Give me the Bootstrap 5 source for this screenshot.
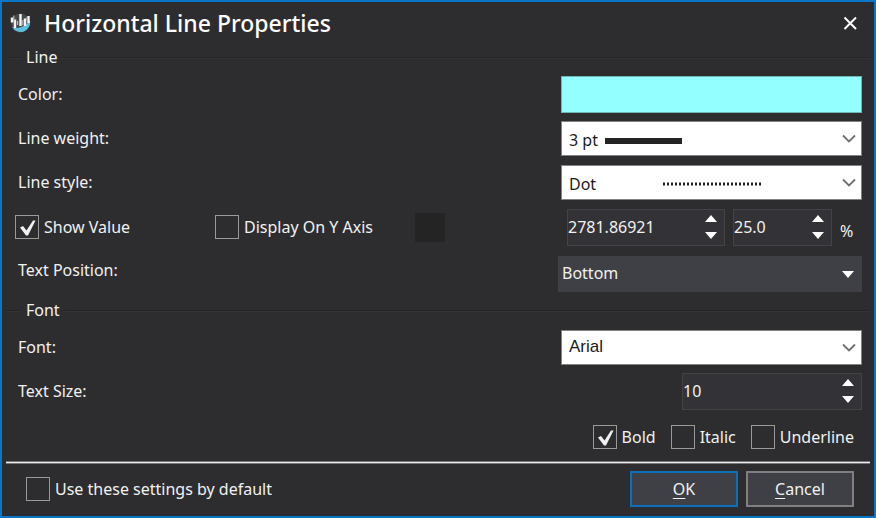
<!DOCTYPE html>
<html lang="en">
<head>
<meta charset="utf-8">
<meta name="viewport" content="width=device-width, initial-scale=1">
<title>Horizontal Line Properties</title>
<link href="https://cdn.jsdelivr.net/npm/bootstrap@5.3.0/dist/css/bootstrap.min.css" rel="stylesheet">
<style>
  body { background: #2d2d30; color: #f1f1f1; font-family: "Noto Sans", "Segoe UI", sans-serif; font-size: 16px; line-height: 24px; }
  .dialog { min-height: 100vh; border: 2px solid #0a76c8; }
  .title-bar { height: 41px; padding: 0 16px 0 8px; gap: 12px; }
  .title-bar h1 { font-size: 23px; line-height: 32px; font-weight: 500; color: #fff; }
  .close-btn { line-height: 0; }
  .group-title { height: 29px; font-size: 16px; line-height: 29px; padding: 0 4px; gap: 5px; }
  .group-title::before, .group-title::after { content: ""; height: 2px; background: #252528; border-bottom: 1px solid #353538; }
  .group-title::before { width: 15px; }
  .group-title::after { flex: 1; }
  .prop-row { min-height: 44px; padding: 0 12px 0 16px; }
  .position-row { margin-top: 4px; }
  .position-row label { margin-top: -8px; }
  .field-col { width: 301px; }
  .field-wide { width: 304px; }
  .color-btn { height: 37px; background: #93ffff; border: 1px solid #6fb5b6; }
  .light-select, .dark-select { appearance: none; width: 100%; border-radius: 0; font-size: 16px; line-height: 24px; display: block; }
  .light-select { height: 35px; padding: 3px 32px 0 7px; background: #fff; color: #1b1b1b; border: 1px solid #828282; }
  .face-select { padding-top: 0; font-family: "Liberation Sans", Arial, sans-serif; font-size: 17px; }
  .dark-select { height: 36px; padding: 0 32px 2px 4px; background: #3f3f46; color: #f1f1f1; border: 0; }
  .arrow { right: 6px; top: 13px; pointer-events: none; }
  .arrow-solid { right: 8px; top: 15px; pointer-events: none; }
  .sample-weight { left: 44px; top: 16px; pointer-events: none; }
  .sample-style { left: 102px; top: 17px; pointer-events: none; }
  .tick { appearance: none; flex: none; width: 24px; height: 24px; margin: 0; border: 1px solid #999; background: transparent center / 22px 22px no-repeat; }
  .tick:checked { background-image: url("data:image/svg+xml,%3Csvg xmlns='http://www.w3.org/2000/svg' viewBox='0 0 22 22'%3E%3Cpath d='M4 11.5L7 10l3.5 4.500L17 4.500h2.500L12 19.500H10z' fill='%23f1f1f1'/%3E%3C/svg%3E"); }
  .tick-label { gap: 5px; }
  .axis-row { padding-left: 13px; padding-top: 2px; }
  .axis-item { width: 200px; }
  .axis-color { width: 30px; height: 29px; background: #242424; border: 0; }
  .spin { height: 37px; background: #333337; border: 1px solid #434346; }
  .spin input { min-width: 0; flex: 1; background: transparent; border: 0; color: #f1f1f1; padding: 0 0 1px 0; outline: 0; }
  .spin button { display: block; width: 26px; height: 17px; padding: 0; border: 0; background: none; line-height: 0; }
  .spin-value { width: 158px; }
  .spin-percent { width: 99px; }
  .spin-size { width: 180px; }
  .percent-sign { width: 22px; padding-top: 8px; }
  .style-row { min-height: 48px; gap: 15px; padding-right: 20px; }
  .rule { height: 3px; margin: 0 4px; background: #ececec; border: solid #777; border-width: 1px 0; }
  .footer-bar { padding: 0 20px 3px 24px; height: 52px; gap: 8px; }
  .dialog-btn { width: 108px; height: 36px; background: #3f3f46; color: #f1f1f1; border: 2px solid #808083; padding: 0; }
  .dialog-btn.default-btn { border-color: #0a70bb; }
  .dialog-btn u { text-underline-offset: 3px; }
</style>
<script src="https://cdn.jsdelivr.net/npm/bootstrap@5.3.0/dist/js/bootstrap.bundle.min.js"></script>
</head>
<body>
<svg class="d-none">
  <symbol id="chevron" viewBox="0 0 14 9"><path d="M1 1.500L7 7.500L13 1.500" fill="none" stroke="#707070" stroke-width="1.800"/></symbol>
  <symbol id="up" viewBox="0 0 12 7"><path d="M0 7L6 0L12 7z" fill="#fff"/></symbol>
  <symbol id="down" viewBox="0 0 12 7"><path d="M0 0L6 7L12 0z" fill="#fff"/></symbol>
</svg>
<form class="dialog d-flex flex-column">
  <header class="title-bar d-flex align-items-center">
    <svg width="22" height="22" viewBox="0 0 22 22" aria-hidden="true">
      <circle cx="10.500" cy="11" r="9.500" fill="#45484b"/>
      <path d="M2 15Q8 17 12.500 14.500T20 8.500A9.700 9.700 0 0 1 2 15z" fill="#5cc0e3"/>
      <path d="M2 5.500v5M5 7.500v8.500M10.500 2v12M15 6.500v7.500M18.500 4v7" stroke="#f4f4f4" stroke-width="2.400"/>
      <path d="M3.800 3.500v7M7.600 9v4M12.800 8v5M17 5v4" stroke="#b4b6b8" stroke-width="1.200"/>
    </svg>
    <h1 class="mb-0 flex-grow-1">Horizontal Line Properties</h1>
    <button type="button" class="close-btn border-0 bg-transparent p-0" aria-label="Close">
      <svg width="15" height="14" viewBox="0 0 15 14"><path d="M1.500 1.500L13 13M13 1.500L1.500 13" stroke="#fff" stroke-width="2"/></svg>
    </button>
  </header>

  <fieldset>
    <legend class="group-title d-flex align-items-center mb-0">Line</legend>
    <div class="prop-row d-flex align-items-center justify-content-between">
      <label for="color">Color:</label>
      <button type="button" id="color" class="color-btn field-col" aria-label="Line color"></button>
    </div>
    <div class="prop-row d-flex align-items-center justify-content-between">
      <label for="weight">Line weight:</label>
      <div class="field-col position-relative">
        <select id="weight" class="light-select"><option>3 pt</option></select>
        <svg class="sample-weight position-absolute" width="78" height="8"><rect x="0" y="1" width="77" height="6" fill="#242424"/></svg>
        <svg class="arrow position-absolute" width="14" height="9"><use href="#chevron"/></svg>
      </div>
    </div>
    <div class="prop-row d-flex align-items-center justify-content-between">
      <label for="style">Line style:</label>
      <div class="field-col position-relative">
        <select id="style" class="light-select"><option>Dot</option></select>
        <svg class="sample-style position-absolute" width="100" height="4"><path d="M0 2H100" stroke="#222" stroke-width="3" stroke-dasharray="2 2"/></svg>
        <svg class="arrow position-absolute" width="14" height="9"><use href="#chevron"/></svg>
      </div>
    </div>
    <div class="prop-row axis-row d-flex align-items-center">
      <label class="tick-label axis-item d-flex align-items-center"><input type="checkbox" class="tick" checked>Show Value</label>
      <label class="tick-label axis-item d-flex align-items-center"><input type="checkbox" class="tick">Display On Y Axis</label>
      <button type="button" class="axis-color" aria-label="Axis color"></button>
      <div class="spin spin-value d-flex align-items-center ms-auto me-2">
        <input type="text" aria-label="Value" value="2781.86921">
        <div>
          <button type="button" aria-label="Increase value"><svg width="12" height="7"><use href="#up"/></svg></button>
          <button type="button" aria-label="Decrease value"><svg width="12" height="7"><use href="#down"/></svg></button>
        </div>
      </div>
      <div class="spin spin-percent d-flex align-items-center me-2">
        <input type="text" id="percent" aria-label="Percent" value="25.0">
        <div>
          <button type="button" aria-label="Increase percent"><svg width="12" height="7"><use href="#up"/></svg></button>
          <button type="button" aria-label="Decrease percent"><svg width="12" height="7"><use href="#down"/></svg></button>
        </div>
      </div>
      <label for="percent" class="percent-sign">%</label>
    </div>
    <div class="prop-row position-row d-flex align-items-center justify-content-between">
      <label for="position">Text Position:</label>
      <div class="field-wide position-relative">
        <select id="position" class="dark-select"><option>Bottom</option></select>
        <svg class="arrow-solid position-absolute" width="12" height="7"><use href="#down"/></svg>
      </div>
    </div>
  </fieldset>

  <fieldset>
    <legend class="group-title d-flex align-items-center mb-0">Font</legend>
    <div class="prop-row d-flex align-items-center justify-content-between">
      <label for="font">Font:</label>
      <div class="field-col position-relative">
        <select id="font" class="light-select face-select"><option>Arial</option></select>
        <svg class="arrow position-absolute" width="14" height="9"><use href="#chevron"/></svg>
      </div>
    </div>
    <div class="prop-row d-flex align-items-center justify-content-between">
      <label for="size">Text Size:</label>
      <div class="spin spin-size d-flex align-items-center">
        <input type="text" id="size" value="10">
        <div>
          <button type="button" aria-label="Increase size"><svg width="12" height="7"><use href="#up"/></svg></button>
          <button type="button" aria-label="Decrease size"><svg width="12" height="7"><use href="#down"/></svg></button>
        </div>
      </div>
    </div>
    <div class="prop-row style-row d-flex align-items-center justify-content-end">
      <label class="tick-label d-flex align-items-center"><input type="checkbox" class="tick" checked>Bold</label>
      <label class="tick-label d-flex align-items-center"><input type="checkbox" class="tick">Italic</label>
      <label class="tick-label d-flex align-items-center"><input type="checkbox" class="tick">Underline</label>
    </div>
  </fieldset>

  <div class="rule"></div>
  <footer class="footer-bar d-flex align-items-center">
    <label class="tick-label d-flex align-items-center me-auto"><input type="checkbox" class="tick">Use these settings by default</label>
    <button type="submit" class="dialog-btn default-btn"><u>O</u>K</button>
    <button type="button" class="dialog-btn"><u>C</u>ancel</button>
  </footer>
</form>
</body>
</html>
